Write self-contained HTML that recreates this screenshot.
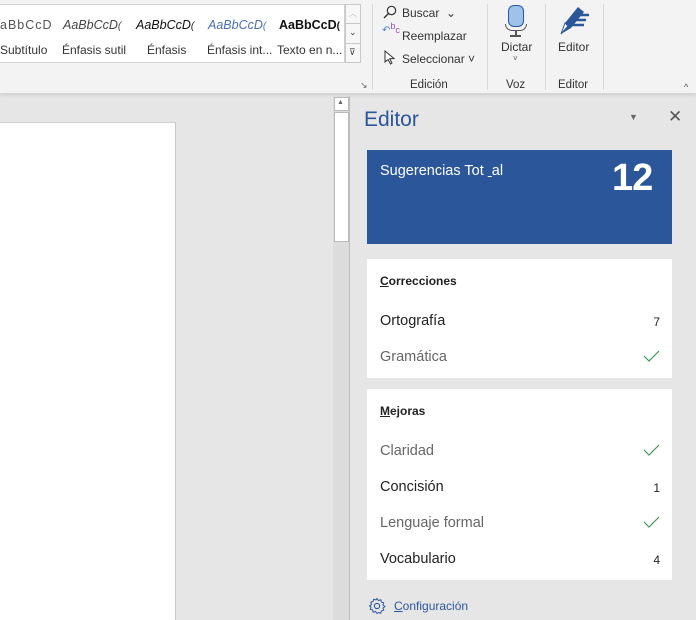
<!DOCTYPE html>
<html><head><meta charset="utf-8"><style>
*{margin:0;padding:0;box-sizing:border-box}
body{width:696px;height:620px;overflow:hidden;position:relative;background:#e6e6e6;font-family:"Liberation Sans",sans-serif;color:#222}
.a{position:absolute}
.rib{left:0;top:0;width:696px;height:94px;background:#f3f3f3;border-bottom:1px solid #d6d6d6;box-shadow:0 1px 3px rgba(0,0,0,.12)}
.sep{width:1px;background:#d8d8d8;top:4px;height:86px}
.lbl{font-size:11.5px;color:#333}
.sty{top:18px;font-size:12.5px;white-space:nowrap}
.sn{top:43px;font-size:12px;color:#333;white-space:nowrap}
.card{background:#fff;left:367px;width:305px}
.row{left:13px;font-size:14.5px;white-space:nowrap}
.num{right:12px;font-size:12px}
.chk{right:12px;width:17px;height:12px}
</style></head><body>
<div class="a rib">
  <div class="a" style="left:0;top:4px;width:345px;height:59px;background:#fff;border:1px solid #d0d0d0;border-left:none"></div>
  <div class="a sty" style="left:0;color:#555;letter-spacing:1px">aBbCcD</div>
  <div class="a sty" style="left:63px;font-style:italic;color:#444">AaBbCcD<span style="font-size:10px">(</span></div>
  <div class="a sty" style="left:136px;font-style:italic;color:#111">AaBbCcD<span style="font-size:10px">(</span></div>
  <div class="a sty" style="left:208px;font-style:italic;color:#4a6fb0">AaBbCcD<span style="font-size:10px">(</span></div>
  <div class="a sty" style="left:279px;font-weight:bold;color:#111">AaBbCcD<span style="font-size:10px">(</span></div>
  <div class="a sn" style="left:0">Subtítulo</div>
  <div class="a sn" style="left:62px">Énfasis sutil</div>
  <div class="a sn" style="left:147px">Énfasis</div>
  <div class="a sn" style="left:207px">Énfasis int...</div>
  <div class="a sn" style="left:277px">Texto en n...</div>
  <div class="a" style="left:345px;top:4px;width:16px;height:59px;border:1px solid #c8c8c8;background:#f7f7f7"></div>
  <div class="a" style="left:345px;top:23px;width:16px;height:1px;background:#c8c8c8"></div>
  <div class="a" style="left:345px;top:43px;width:16px;height:1px;background:#c8c8c8"></div>
  <div class="a" style="left:349px;top:8px;font-size:8px;color:#bbb">︿</div>
  <div class="a" style="left:349px;top:27px;font-size:9px;color:#444">⌄</div>
  <div class="a" style="left:349px;top:47px;font-size:9px;color:#444">⊽</div>
  <div class="a" style="left:360px;top:80px;font-size:9px;color:#666">↘</div>
  <div class="a sep" style="left:372px"></div>
  <svg class="a" style="left:383px;top:5px" width="14" height="14"><circle cx="8.5" cy="5.5" r="4.2" fill="none" stroke="#333" stroke-width="1.2"/><path d="M5.5 8.5L1 13" stroke="#333" stroke-width="1.4"/></svg>
  <div class="a lbl" style="left:402px;top:6px;font-size:12px">Buscar &nbsp;⌄</div>
  <div class="a" style="left:382px;top:25px;font-size:10px;color:#4a7fc0;line-height:10px">&#8630;<span style="color:#a050b0;font-size:9px;position:relative;top:-4px">b</span><span style="color:#a050b0;font-size:9px">c</span></div>
  <div class="a lbl" style="left:402px;top:29px;font-size:12px">Reemplazar</div>
  <svg class="a" style="left:384px;top:50px" width="12" height="15"><path d="M1 1L1 12L4 9.5L6.5 14L8 13L5.7 8.7L10 8.5Z" fill="#fff" stroke="#333" stroke-width="1"/></svg>
  <div class="a lbl" style="left:402px;top:52px;font-size:12px">Seleccionar ˅</div>
  <div class="a lbl" style="left:410px;top:79px">Edición</div>
  <div class="a sep" style="left:487px"></div>
  <div class="a" style="left:508px;top:5px;width:16px;height:22px;border:1.5px solid #2b579a;border-radius:6px;background:#9ec3ea"></div>
  <div class="a" style="left:505px;top:24px;width:22px;height:7px;border:1.5px solid #555;border-top:none;border-radius:0 0 8px 8px"></div>
  <div class="a" style="left:515px;top:31px;width:1.5px;height:4px;background:#555"></div>
  <div class="a" style="left:510px;top:35px;width:11px;height:1.5px;background:#555"></div>
  <div class="a lbl" style="left:501px;top:40px;font-size:12px">Dictar</div>
  <div class="a" style="left:513px;top:54px;font-size:8px;color:#555">˅</div>
  <div class="a lbl" style="left:506px;top:79px">Voz</div>
  <div class="a sep" style="left:545px"></div>
  <svg class="a" style="left:558px;top:4px" width="34" height="32"><path d="M3 30L7 19L20 3L26 8L13 24Z" fill="#2b579a"/><path d="M3 30L7 19L10 22Z" fill="#fff" stroke="#2b579a" stroke-width="1"/><path d="M20 11h11M17 16h11M14 21h12" stroke="#2b579a" stroke-width="2.5"/></svg>
  <div class="a lbl" style="left:558px;top:40px;font-size:12px">Editor</div>
  <div class="a lbl" style="left:558px;top:79px">Editor</div>
  <div class="a sep" style="left:603px"></div>
  <div class="a" style="left:684px;top:82px;font-size:9px;color:#444">^</div>
</div>
<div class="a" style="left:0;top:122px;width:176px;height:498px;background:#fff;border-right:1px solid #c8c8c8;border-top:1px solid #d0d0d0"></div>
<div class="a" style="left:333px;top:96px;width:17px;height:524px;background:#dcdcdc;border-right:1px solid #bdbdbd"></div>
<div class="a" style="left:334px;top:97px;width:15px;height:14px;background:#fff;border:1px solid #bbb"></div>
<div class="a" style="left:337px;top:99px;font-size:7px;color:#666">▲</div>
<div class="a" style="left:334px;top:112px;width:15px;height:130px;background:#fff;border:1px solid #bbb"></div>
<div class="a" style="left:364px;top:108px;font-size:21px;color:#2b579a">Editor</div>
<div class="a" style="left:629px;top:112px;font-size:9px;color:#666">▼</div>
<div class="a" style="left:668px;top:107px;font-size:17px;color:#555">✕</div>
<div class="a" style="left:367px;top:150px;width:305px;height:94px;background:#2b579a"></div>
<div class="a" style="left:380px;top:163px;font-size:14.5px;color:#fff">Sugerencias Tot <u>&nbsp;</u>al</div>
<div class="a" style="left:612px;top:157px;font-size:38px;color:#fff;font-weight:bold;letter-spacing:-1px">12</div>
<div class="a card" style="top:259px;height:119px">
  <div class="a" style="left:13px;top:15px;font-size:12px;font-weight:bold"><u>C</u>orrecciones</div>
  <div class="a row" style="top:54px">Ortografía</div><div class="a num" style="top:56px">7</div>
  <div class="a row" style="top:90px;color:#666">Gramática</div>
  <svg class="a chk" style="top:91px" viewBox="0 0 17 12"><path d="M1 6L6 11L16 1" fill="none" stroke="#3a9a5a" stroke-width="1.2"/></svg>
</div>
<div class="a card" style="top:389px;height:191px">
  <div class="a" style="left:13px;top:15px;font-size:12px;font-weight:bold"><u>M</u>ejoras</div>
  <div class="a row" style="top:54px;color:#666">Claridad</div>
  <svg class="a chk" style="top:55px" viewBox="0 0 17 12"><path d="M1 6L6 11L16 1" fill="none" stroke="#3a9a5a" stroke-width="1.2"/></svg>
  <div class="a row" style="top:90px">Concisión</div><div class="a num" style="top:92px">1</div>
  <div class="a row" style="top:126px;color:#666">Lenguaje formal</div>
  <svg class="a chk" style="top:127px" viewBox="0 0 17 12"><path d="M1 6L6 11L16 1" fill="none" stroke="#3a9a5a" stroke-width="1.2"/></svg>
  <div class="a row" style="top:162px">Vocabulario</div><div class="a num" style="top:164px">4</div>
</div>
<svg class="a" style="left:368px;top:597px" width="18" height="18" viewBox="0 0 18 18"><circle cx="9" cy="9" r="2.6" fill="none" stroke="#2b579a" stroke-width="1.1"/><path d="M9 1.5l1.5 2 2.3-.7.6 2.3 2.3.7-.7 2.3 2 1.4-2 1.5.7 2.3-2.3.6-.6 2.3-2.3-.7L9 16.5l-1.5-2-2.3.7-.6-2.3-2.3-.6.7-2.3L1.5 9l2-1.5-.7-2.3 2.3-.7.6-2.3 2.3.7Z" fill="none" stroke="#2b579a" stroke-width="1"/></svg>
<div class="a" style="left:394px;top:599px;font-size:12px;color:#2b579a"><u>C</u>onfiguración</div>
</body></html>
